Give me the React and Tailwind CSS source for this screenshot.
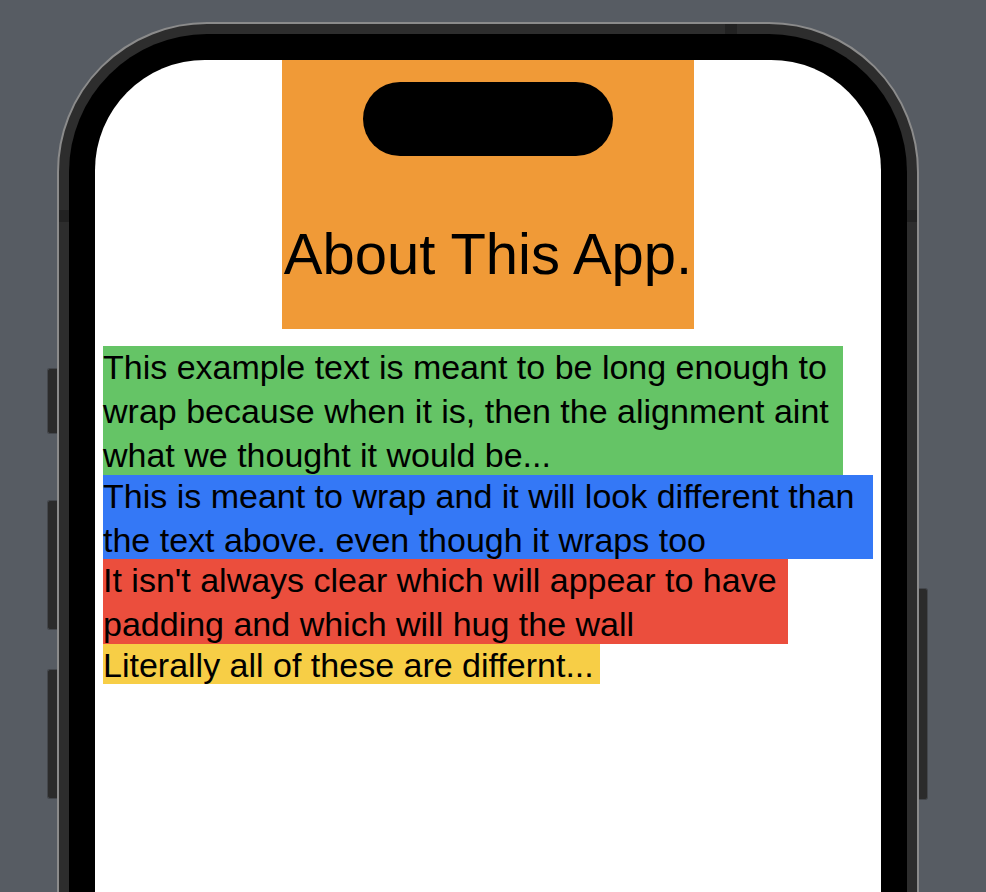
import React from 'react';

// Bloques de texto con sus anchos medidos del simulador
const bloques = [
  {
    color: 'bg-[#65c466]',
    size: 'w-[740px] h-[129px]',
    lineas: [
      'This example text is meant to be long enough to',
      'wrap because when it is, then the alignment aint',
      'what we thought it would be...',
    ],
  },
  {
    color: 'bg-[#3478f6]',
    size: 'w-[770px] h-[84px]',
    lineas: ['This is meant to wrap and it will look different than', 'the text above. even though it wraps too'],
  },
  {
    color: 'bg-[#eb4e3d]',
    size: 'w-[685px] h-[85px]',
    lineas: ['It isn\'t always clear which will appear to have', 'padding and which will hug the wall'],
  },
  {
    color: 'bg-[#f7ce46]',
    size: 'w-[497px] h-[40px]',
    lineas: ['Literally all of these are differnt...'],
  },
];

const BotonLateral = ({ alto, lado = 'izq' }) => (
  <div
    className={`w-full ${alto} bg-[#2b2b2b] border border-[#44474c] ${
      lado === 'izq' ? 'rounded-l-[3px] border-r-0' : 'rounded-r-[3px] border-l-0'
    }`}
  ></div>
);

const App = () => {
  return (
    <div className="w-[986px] h-[892px] overflow-hidden bg-[#575c63] flex pt-[22px] pl-[47px] font-['Liberation_Sans',Arial,sans-serif] text-black">
      {/* Botones izquierdos */}
      <div className="w-[10px] shrink-0 flex flex-col pt-[346px]">
        <BotonLateral alto="h-[66px]" />
        <div className="h-[66px]"></div>
        <BotonLateral alto="h-[130px]" />
        <div className="h-[39px]"></div>
        <BotonLateral alto="h-[130px]" />
      </div>

      {/* Marco del teléfono */}
      <div className="relative w-[862px] h-[1000px] shrink-0 rounded-t-[150px] border-2 border-[#8b8b8b] bg-[#2d2d2d] p-[10px]">
        <div className="absolute left-0 top-[186px] w-[10px] h-[12px] bg-[#222222]"></div>
        <div className="absolute right-0 top-[186px] w-[10px] h-[12px] bg-[#222222]"></div>
        <div className="absolute top-0 left-[666px] w-[12px] h-[10px] bg-[#222222]"></div>

        <div className="h-full rounded-t-[138px] bg-black p-[26px]">
          {/* Pantalla */}
          <div className="relative h-full rounded-t-[110px] bg-white overflow-hidden">
            <div className="flex justify-center">
              <div className="w-[412px] h-[269px] bg-[#f09a37] pt-[165px] text-center">
                <h1 className="text-[58px] leading-[58px] whitespace-nowrap">About This App.</h1>
              </div>
            </div>

            {/* Dynamic Island */}
            <div className="absolute top-[22px] left-[268px] w-[250px] h-[74px] rounded-full bg-black"></div>

            <div className="mt-[17px] pl-[8px] flex flex-col items-start">
              {bloques.map((b, i) => (
                <div key={i} className={`${b.color} ${b.size} flex flex-col`}>
                  <p className="-mt-[1.5px] text-[34px] leading-[44px] whitespace-nowrap">
                    {b.lineas.map((l, j) => (
                      <React.Fragment key={j}>
                        {j > 0 && <br />}
                        {l}
                      </React.Fragment>
                    ))}
                  </p>
                </div>
              ))}
            </div>
          </div>
        </div>
      </div>

      {/* Botón derecho */}
      <div className="w-[9px] shrink-0 flex flex-col pt-[566px]">
        <BotonLateral alto="h-[212px]" lado="der" />
      </div>
    </div>
  );
};

export default App;
